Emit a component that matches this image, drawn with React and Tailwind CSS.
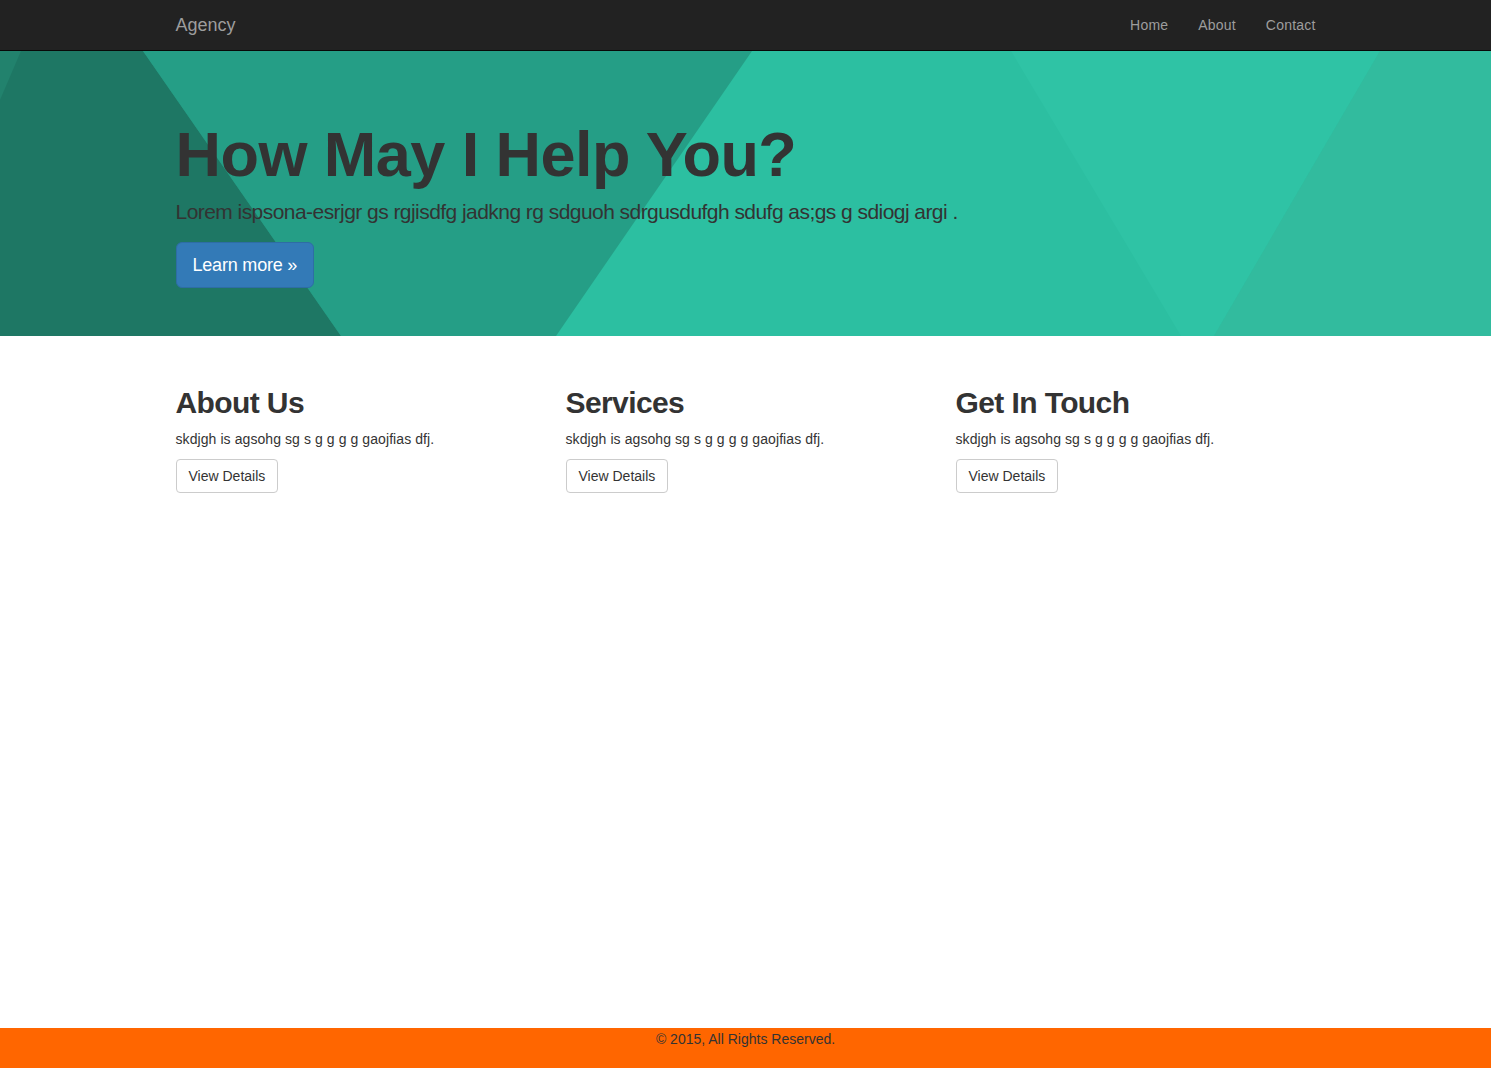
export default function App() {
  const font = { fontFamily: '"Liberation Sans", Arial, Helvetica, sans-serif' };
  const cols = [
    { title: "About Us" },
    { title: "Services" },
    { title: "Get In Touch" },
  ];
  return (
    <div
      className="min-h-screen flex flex-col bg-white text-[#333] text-[14px] leading-[20px] font-['Liberation_Sans',Arial,sans-serif]"
      style={font}
    >
      {/* Navbar */}
      <nav className="h-[51px] bg-[#222] border-b border-[#080808]">
        <div className="w-[1170px] mx-auto px-[15px] flex items-start justify-between">
          <a className="h-[50px] py-[15px] text-[18px] leading-[20px] text-[#9d9d9d]">Agency</a>
          <ul className="flex mr-[-15px]">
            {["Home", "About", "Contact"].map((l) => (
              <li key={l}>
                <a className="block py-[15px] px-[15px] text-[14px] leading-[20px] text-[#9d9d9d] tracking-[0.2px]">{l}</a>
              </li>
            ))}
          </ul>
        </div>
      </nav>

      {/* Hero */}
      <section className="relative h-[285px] overflow-hidden bg-[#2cbfa1]">
        <svg
          className="absolute inset-0 w-full h-full"
          viewBox="0 0 1491 285"
          preserveAspectRatio="none"
          aria-hidden="true"
        >
          <rect x="0" y="0" width="1491" height="285" fill="#2cbfa1" />
          <polygon points="1011,0 1380,0 1214,285 1181,285" fill="#2fc3a5" />
          <polygon points="1380,0 1491,0 1491,285 1214,285" fill="#32bb9e" />
          <polygon points="143,0 752,0 556,285 341,285" fill="#259e86" />
          <polygon points="0,0 143,0 341,285 0,285" fill="#1e7764" />
          <polygon points="0,0 21,0 0,49" fill="#22826d" />
        </svg>
        <div className="relative w-[1170px] mx-auto px-[15px] pt-[48px]">
          <h1 className="mt-[21px] mb-[8px] text-[63px] leading-[69px] font-bold text-[#333] tracking-[-0.55px]">
            How May I Help You?
          </h1>
          <p className="mb-[15px] text-[21px] leading-[30px] font-light text-[#333] tracking-[-0.55px]">
            Lorem ispsona-esrjgr gs rgjisdfg jadkng rg sdguoh sdrgusdufgh sdufg as;gs g sdiogj argi .
          </p>
          <a className="inline-block h-[46px] px-[16px] py-[10px] text-[18px] leading-[24px] text-white bg-[#337ab7] border border-[#2e6da4] rounded-[6px] tracking-[-0.2px]">
            Learn more »
          </a>
        </div>
      </section>

      {/* Columns */}
      <main className="flex-1 mt-[30px]">
        <div className="w-[1170px] mx-auto grid grid-cols-3">
          {cols.map((c) => (
            <div key={c.title} className="px-[15px]">
              <h2 className="mt-[20px] mb-[10px] text-[30px] leading-[33px] font-bold text-[#333] tracking-[-0.6px]">
                {c.title}
              </h2>
              <p className="mb-[10px] text-[14px] leading-[20px] tracking-[0.08px]">
                skdjgh is agsohg sg s g g g g gaojfias dfj.
              </p>
              <a className="inline-block h-[34px] px-[12px] py-[6px] text-[14px] leading-[20px] text-[#333] bg-white border border-[#ccc] rounded-[4px]">
                View Details
              </a>
            </div>
          ))}
        </div>
      </main>

      {/* Footer */}
      <footer className="h-[40px] bg-[#ff6600] text-center">
        <p className="text-[14px] leading-[20px] text-[#333] pt-[1px]">© 2015, All Rights Reserved.</p>
      </footer>
    </div>
  );
}
